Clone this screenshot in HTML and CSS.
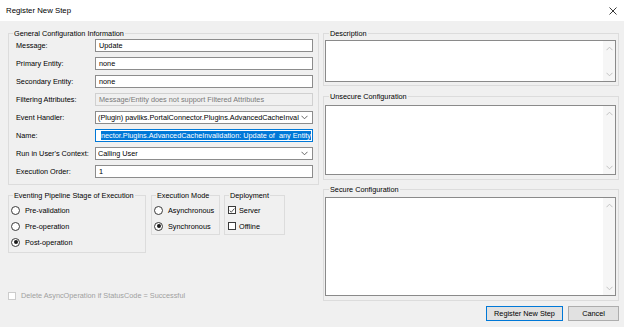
FILE: index.html
```html
<!DOCTYPE html>
<html>
<head>
<meta charset="utf-8">
<link rel="stylesheet" href="styles.css">
</head>
<body>
<div class="titlebar">
  <span class="title">Register New Step</span>
  <svg class="close" width="8" height="8" viewBox="0 0 8 8"><path d="M0.5 0.5L7.5 7.5M7.5 0.5L0.5 7.5" stroke="#222" stroke-width="0.9" fill="none"/></svg>
</div>
<div class="main">
  <div class="left">
    <fieldset class="group general">
      <legend>General Configuration Information</legend>
      <div class="form">
        <label>Message:</label><div class="field">Update</div>
        <label>Primary Entity:</label><div class="field">none</div>
        <label>Secondary Entity:</label><div class="field">none</div>
        <label>Filtering Attributes:</label><div class="field disabled">Message/Entity does not support Filtered Attributes</div>
        <label>Event Handler:</label><div class="field combo"><span class="val">(Plugin) pavliks.PortalConnector.Plugins.AdvancedCacheInval</span><svg class="chev" width="7" height="5" viewBox="0 0 7 5"><path d="M0.5 0.8L3.5 3.8L6.5 0.8" stroke="#555" stroke-width="0.9" fill="none"/></svg></div>
        <label>Name:</label><div class="field focused"><span class="sel">nector.Plugins.AdvancedCacheInvalidation: Update of &nbsp;any Entity</span></div>
        <label>Run in User's Context:</label><div class="field combo"><span class="val">Calling User</span><svg class="chev" width="7" height="5" viewBox="0 0 7 5"><path d="M0.5 0.8L3.5 3.8L6.5 0.8" stroke="#555" stroke-width="0.9" fill="none"/></svg></div>
        <label>Execution Order:</label><div class="field">1</div>
      </div>
    </fieldset>
    <div class="groups">
      <fieldset class="group stage">
        <legend>Eventing Pipeline Stage of Execution</legend>
        <div class="opts">
          <div class="opt"><span class="radio"></span>Pre-validation</div>
          <div class="opt"><span class="radio"></span>Pre-operation</div>
          <div class="opt"><span class="radio on"></span>Post-operation</div>
        </div>
      </fieldset>
      <fieldset class="group mode">
        <legend>Execution Mode</legend>
        <div class="opts">
          <div class="opt"><span class="radio"></span>Asynchronous</div>
          <div class="opt"><span class="radio on"></span>Synchronous</div>
        </div>
      </fieldset>
      <fieldset class="group deploy">
        <legend>Deployment</legend>
        <div class="opts">
          <div class="opt"><span class="check"><svg width="7" height="7" viewBox="0 0 7 7"><path d="M0.8 3.6L2.7 5.5L6.3 1.2" stroke="#222" stroke-width="0.9" fill="none"/></svg></span>Server</div>
          <div class="opt"><span class="check"></span>Offline</div>
        </div>
      </fieldset>
    </div>
    <div class="opt delete"><span class="check"></span>Delete AsyncOperation if StatusCode = Successful</div>
  </div>
  <div class="right">
    <fieldset class="group desc">
      <legend>Description</legend>
      <div class="textbox tb-desc"><div class="tb-body"></div><div class="sbar"><svg width="7" height="5" viewBox="0 0 7 5"><path d="M0.5 4.2L3.5 1.2L6.5 4.2" stroke="#bcbcbc" stroke-width="0.9" fill="none"/></svg><svg width="7" height="5" viewBox="0 0 7 5"><path d="M0.5 0.8L3.5 3.8L6.5 0.8" stroke="#bcbcbc" stroke-width="0.9" fill="none"/></svg></div></div>
    </fieldset>
    <fieldset class="group unsecure">
      <legend>Unsecure Configuration</legend>
      <div class="textbox tb-unsecure"><div class="tb-body"></div><div class="sbar"><svg width="7" height="5" viewBox="0 0 7 5"><path d="M0.5 4.2L3.5 1.2L6.5 4.2" stroke="#bcbcbc" stroke-width="0.9" fill="none"/></svg><svg width="7" height="5" viewBox="0 0 7 5"><path d="M0.5 0.8L3.5 3.8L6.5 0.8" stroke="#bcbcbc" stroke-width="0.9" fill="none"/></svg></div></div>
    </fieldset>
    <fieldset class="group secure">
      <legend>Secure Configuration</legend>
      <div class="textbox tb-secure"><div class="tb-body"></div><div class="sbar"><svg width="7" height="5" viewBox="0 0 7 5"><path d="M0.5 4.2L3.5 1.2L6.5 4.2" stroke="#bcbcbc" stroke-width="0.9" fill="none"/></svg><svg width="7" height="5" viewBox="0 0 7 5"><path d="M0.5 0.8L3.5 3.8L6.5 0.8" stroke="#bcbcbc" stroke-width="0.9" fill="none"/></svg></div></div>
    </fieldset>
  </div>
</div>
<div class="footer">
  <button class="btn default">Register New Step</button>
  <button class="btn cancel">Cancel</button>
</div>
</body>
</html>
```
FILE: styles.css
```css
* { box-sizing: border-box; }
html, body { margin: 0; padding: 0; }
body {
  width: 624px;
  height: 327px;
  background: #f0f0f0;
  font-family: "Liberation Sans", Arial, sans-serif;
  font-size: 7.3px;
  color: #000;
  overflow: hidden;
}
.titlebar {
  height: 21px;
  background: #fff;
  display: flex;
  align-items: center;
  justify-content: space-between;
  padding: 0 7px 0 6px;
}
.title { font-size: 7.8px; line-height: 21px; }
.close { display: block; }

.main {
  display: grid;
  grid-template-columns: 311px 296px;
  column-gap: 4px;
  padding: 8px 0 0 8px;
}
.group {
  margin: 0;
  padding: 0;
  border: 1px solid #dcdcdc;
  min-width: 0;
}
.group legend {
  font-size: 7.3px;
  line-height: 9px;
  padding: 0 1px;
  margin-left: 4px;
  color: #000;
}
.left { display: flex; flex-direction: column; }
.general { width: 311px; }
.form {
  display: grid;
  grid-template-columns: 79px 218px;
  grid-auto-rows: 13px;
  row-gap: 5px;
  padding: 1px 5px 6px 7px;
}
.form label { line-height: 13px; white-space: nowrap; }
.field {
  border: 1px solid #8c8c8c;
  background: #fff;
  line-height: 11px;
  padding: 0 3px;
  white-space: nowrap;
  overflow: hidden;
}
.field.disabled {
  border-color: #d0d0d0;
  background: #f0f0f0;
  color: #7a7a7a;
}
.field.combo {
  display: flex;
  align-items: center;
  padding: 0 4px 0 2px;
}
.combo .val { flex: 1; overflow: hidden; white-space: nowrap; }
.chev { flex: none; margin-left: 2px; display: block; }
.field.focused {
  border-color: #0078d7;
  display: flex;
  justify-content: flex-end;
  align-items: center;
  padding: 0 1px 0 2px;
}
.sel {
  background: #0078d7;
  color: #fff;
  line-height: 9px;
  white-space: nowrap;
  flex: none;
}

.groups {
  display: flex;
  align-items: flex-start;
  margin-top: 6px;
}
.stage { width: 138px; }
.mode { width: 69px; margin-left: 5px; }
.deploy { width: 61px; margin-left: 4px; }
.opts { display: flex; flex-direction: column; padding: 2px 0 0 2px; }
.stage .opts { padding-bottom: 2px; }
.deploy .opts { padding-left: 3px; }
.opt {
  height: 16px;
  display: flex;
  align-items: center;
  white-space: nowrap;
}
.radio {
  width: 9px;
  height: 9px;
  border: 1px solid #3a3a3a;
  border-radius: 50%;
  background: #fff;
  margin-right: 5px;
  display: flex;
  align-items: center;
  justify-content: center;
  flex: none;
}
.radio.on::after {
  content: "";
  width: 4px;
  height: 4px;
  border-radius: 50%;
  background: #1a1a1a;
}
.check {
  width: 8px;
  height: 8px;
  border: 1px solid #3a3a3a;
  background: #fff;
  margin-right: 3px;
  display: flex;
  align-items: center;
  justify-content: center;
  flex: none;
}
.check svg { display: block; }
.delete {
  margin-top: auto;
  height: 11px;
  color: #a0a0a0;
}
.delete .check { border-color: #cccccc; margin-right: 5px; }

.right { display: flex; flex-direction: column; }
.right .group { width: 296px; }
.desc { padding: 2px 2px 3px 1px; }
.unsecure { margin-top: 6px; padding: 4px 2px 4px 1px; }
.secure { margin-top: 5px; padding: 3px 2px 4px 1px; }
.textbox {
  border: 1px solid #8a8a8a;
  background: #fff;
  display: flex;
}
.tb-desc { height: 42px; }
.tb-unsecure { height: 70px; }
.tb-secure { height: 99px; }
.tb-body { flex: 1; }
.sbar {
  width: 12px;
  background: #f6f6f6;
  display: flex;
  flex-direction: column;
  justify-content: space-between;
  align-items: center;
  padding: 5px 0 4px;
}
.sbar svg { display: block; }

.footer {
  display: flex;
  justify-content: flex-end;
  gap: 5px;
  margin-top: 5px;
  padding-right: 5px;
}
.btn {
  height: 15px;
  margin: 0;
  padding: 0;
  font-family: "Liberation Sans", Arial, sans-serif;
  font-size: 7.3px;
  color: #000;
  background: #e1e1e1;
  border: 1px solid #adadad;
  border-radius: 0;
  line-height: 13px;
}
.btn.default { width: 77px; border-color: #0078d7; }
.btn.cancel { width: 51px; }
```
